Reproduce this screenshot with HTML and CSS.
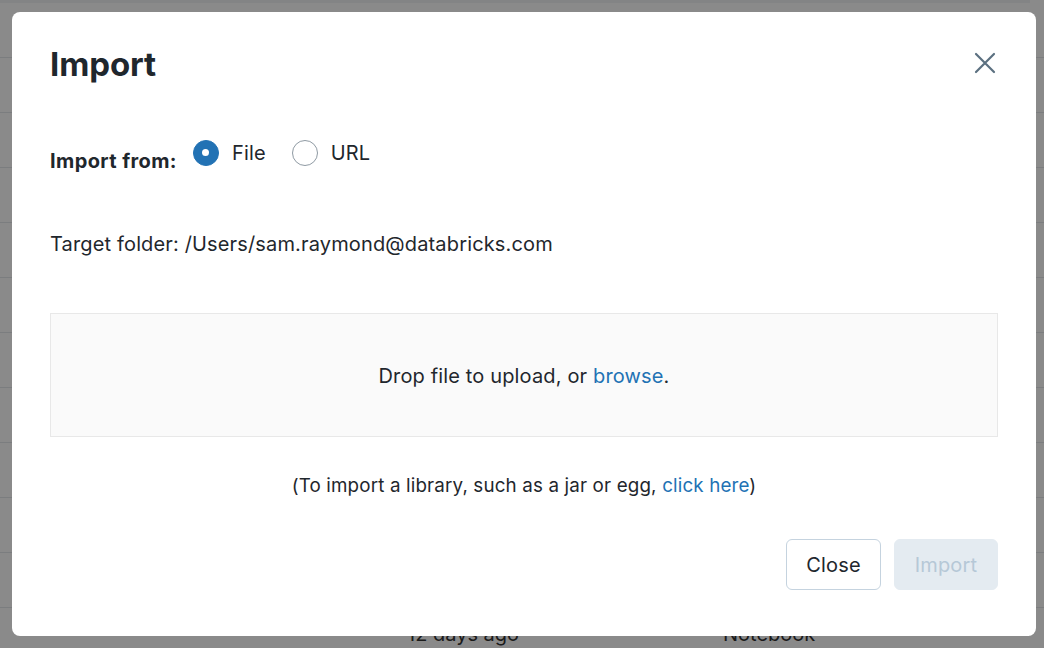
FILE: index.html
```html
<!DOCTYPE html>
<html lang="en">
<head>
<meta charset="utf-8">
<title>Import</title>
<link rel="stylesheet" href="styles.css">
</head>
<body>
<div class="page">
  <div class="topband"></div>
  <div class="rows">
    <div class="row"></div><div class="row"></div><div class="row"></div><div class="row"></div>
    <div class="row"></div><div class="row"></div><div class="row"></div><div class="row"></div>
    <div class="row"></div><div class="row"></div><div class="row"></div>
    <div class="row last"><span class="c-date">12 days ago</span><span class="c-type">Notebook</span></div>
  </div>
</div>
<div class="overlay"></div>
<div class="modal" role="dialog">
  <div class="header">
    <h1 class="title">Import</h1>
    <button class="x" aria-label="Close">
      <svg width="22" height="22" viewBox="0 0 22 22"><path d="M2 2 L20 20 M20 2 L2 20" stroke="#5b7080" stroke-width="2.2" stroke-linecap="round" fill="none"/></svg>
    </button>
  </div>
  <div class="from">
    <span class="from-label">Import from:</span>
    <label class="opt"><span class="radio on"></span><span>File</span></label>
    <label class="opt"><span class="radio"></span><span>URL</span></label>
  </div>
  <div class="target">Target folder: /Users/sam.raymond@databricks.com</div>
  <div class="drop">Drop file to upload, or&nbsp;<a class="link">browse</a>.</div>
  <div class="lib">(To import a library, such as a jar or egg, <a class="link">click here</a>)</div>
  <div class="footer">
    <button class="btn btn-close">Close</button>
    <button class="btn btn-import">Import</button>
  </div>
</div>
</body>
</html>
```
FILE: styles.css
```css
* { box-sizing: border-box; }
html, body { margin: 0; padding: 0; }
body {
  width: 1044px;
  height: 648px;
  overflow: hidden;
  background: #ffffff;
  font-family: Inter, "Liberation Sans", sans-serif;
  color: #1f272d;
}
.page { width: 1044px; height: 648px; }
.topband { height: 3px; width: 1030px; background: #f2f4f6; }
.row {
  height: 55px;
  border-bottom: 1px solid #e3e7ea;
}
.row.last {
  border-bottom: none;
  display: flex;
  align-items: flex-start;
  padding-top: 14px;
  line-height: 24px;
}
.c-date { margin-left: 407px; font-size: 20px; color: #333; width: 316px; }
.c-type { font-size: 20px; color: #333; }

.overlay {
  position: fixed;
  inset: 0;
  background: rgba(0, 0, 0, 0.46);
}
.modal {
  position: absolute;
  left: 12px;
  top: 12px;
  width: 1024px;
  height: 624px;
  background: #ffffff;
  border-radius: 8px;
  padding: 0 38px 46px;
  display: flex;
  flex-direction: column;
  letter-spacing: 0.15px;
}
.header {
  height: 104px;
  display: flex;
  align-items: center;
  justify-content: space-between;
}
.title {
  margin: 0;
  font-size: 33px;
  line-height: 40px;
  font-weight: 700;
  color: #1f272d;
  letter-spacing: -0.1px;
}
.x {
  border: 0;
  background: none;
  padding: 0;
  width: 22px;
  height: 22px;
  margin-right: 2px;
  margin-top: -2px;
  display: flex;
}
.from {
  margin-top: 19px;
  height: 40px;
  display: flex;
  align-items: center;
  font-size: 20px;
}
.from-label {
  font-weight: 700;
  letter-spacing: 0.4px;
  padding-top: 12px;
  margin-right: 16px;
}
.opt {
  display: flex;
  align-items: center;
  gap: 13px;
  margin-right: 26px;
  margin-bottom: 4px;
  color: #1f272d;
}
.radio {
  width: 26px;
  height: 26px;
  border-radius: 50%;
  border: 1px solid #8f9aa3;
  background: #fff;
  display: inline-block;
  position: relative;
}
.radio.on {
  background: #2272b4;
  border-color: #2272b4;
}
.radio.on::after {
  content: "";
  position: absolute;
  left: 50%;
  top: 50%;
  width: 7px;
  height: 7px;
  margin: -3.5px 0 0 -3.5px;
  border-radius: 50%;
  background: #fff;
}
.target {
  margin-top: 56px;
  font-size: 20px;
  line-height: 28px;
}
.drop {
  margin-top: 55px;
  height: 124px;
  background: #fafafa;
  border: 1px solid #e8e8e8;
  display: flex;
  align-items: center;
  justify-content: center;
  font-size: 20px;
  padding-top: 1px;
}
.link { color: #2272b4; text-decoration: none; }
.lib {
  margin-top: 35px;
  font-size: 18.8px;
  line-height: 28px;
  text-align: center;
}
.footer {
  margin-top: 39px;
  display: flex;
  justify-content: flex-end;
  gap: 13px;
}
.btn {
  height: 51px;
  border-radius: 6px;
  font-family: inherit;
  font-size: 20px;
  letter-spacing: 0.15px;
  padding: 0;
}
.btn-close {
  width: 95px;
  background: #fff;
  border: 1px solid #c5d3df;
  color: #1f272d;
}
.btn-import {
  width: 104px;
  background: #e4ebf1;
  border: 1px solid #e4ebf1;
  color: #b6c8d7;
}
```
